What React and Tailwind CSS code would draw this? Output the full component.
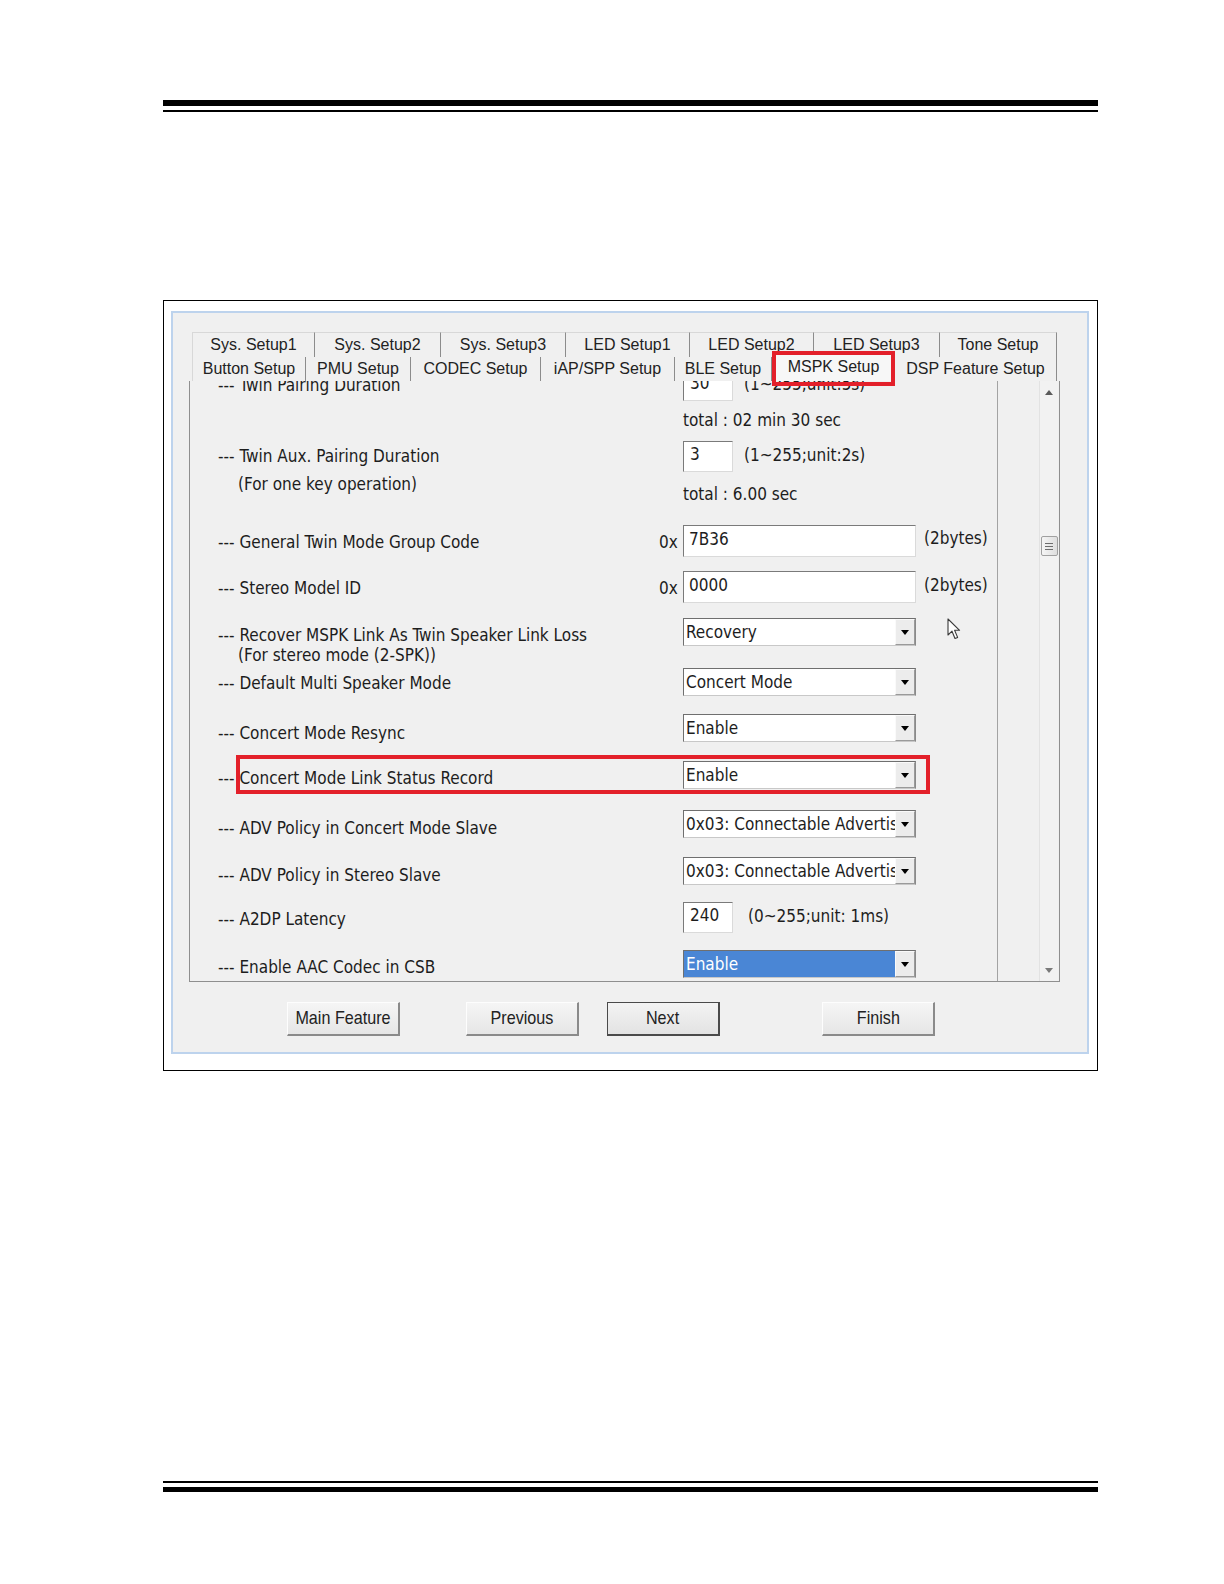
import React from "react";

const ui = "font-['DejaVu_Sans_Condensed','DejaVu_Sans',sans-serif] [font-stretch:condensed]";

const row1 = [
  ["Sys. Setup1", "w-[123px]"],
  ["Sys. Setup2", "w-[126px]"],
  ["Sys. Setup3", "w-[125px]"],
  ["LED Setup1", "w-[124px]"],
  ["LED Setup2", "w-[124px]"],
  ["LED Setup3", "w-[126px]"],
  ["Tone Setup", "w-[117px]"],
];

const row2 = [
  ["Button Setup", "w-[114px]"],
  ["PMU Setup", "w-[105px]"],
  ["CODEC Setup", "w-[130px]"],
  ["iAP/SPP Setup", "w-[134px]"],
  ["BLE Setup", "w-[97px]"],
  ["MSPK Setup", "w-[123px]", true],
  ["DSP Feature Setup", "w-[162px]"],
];

const Arrow = ({ up, dark }) => (
  <svg width="8" height="5" viewBox="0 0 8 5">
    <path d={up ? "M0 5H8L4 0Z" : "M0 0H8L4 5Z"} fill={dark ? "#000" : up ? "#5a5a5a" : "#7a7a7a"} />
  </svg>
);

function TextBox({ value, wide }) {
  return (
    <div
      className={
        wide
          ? "flex h-[32px] w-[233px] items-center border border-t-[#7a7a7a] border-l-[#7a7a7a] border-r-[#dadada] border-b-[#dadada] bg-white pb-[3px] pl-[5px]"
          : "flex h-[31px] w-[50px] items-center border border-t-[#7a7a7a] border-l-[#7a7a7a] border-r-[#dadada] border-b-[#dadada] bg-white pb-[3px] pl-[6px]"
      }
    >
      {value}
    </div>
  );
}

function Select({ value, active }) {
  return (
    <div className="flex h-[28px] w-[233px] border border-t-[#6f6f6f] border-l-[#6f6f6f] border-r-[#8a8a8a] border-b-[#c8c8c8] bg-white">
      <div
        className={
          active
            ? "flex flex-1 items-center overflow-hidden whitespace-nowrap bg-[#4a86d5] pl-[2px] pt-[2px] text-white"
            : "flex flex-1 items-center overflow-hidden whitespace-nowrap pl-[2px] pt-[2px]"
        }
      >
        {value}
      </div>
      <div className="flex w-[20px] shrink-0 items-center justify-center border border-t-[#fafafa] border-l-[#fafafa] border-r-[#9a9a9a] border-b-[#9a9a9a] bg-[#ececec]">
        <Arrow dark />
      </div>
    </div>
  );
}

function Row({ h, label, sub, prefix, lt, subGap, children }) {
  return (
    <div className={"flex shrink-0 " + h}>
      <div className={"w-[469px] shrink-0 pl-[28px] " + (lt || "pt-[7px]")}>
        <div className="h-[20px] whitespace-nowrap leading-[20px]">--- {label}</div>
        {sub && (
          <div className={"whitespace-nowrap pl-[20px] leading-[20px] " + (subGap || "")}>{sub}</div>
        )}
      </div>
      <div className={"w-[24px] shrink-0 leading-[20px] " + (lt || "pt-[7px]")}>{prefix}</div>
      <div>{children}</div>
    </div>
  );
}

function Btn({ label, def }) {
  return (
    <div
      className={
        def
          ? "flex h-[34px] w-[113px] items-center justify-center border border-[#4a4a4a] border-r-2 border-b-2 bg-linear-to-b from-[#f3f3f3] to-[#e3e3e3]"
          : "flex h-[34px] w-[113px] items-center justify-center border border-t-[#fdfdfd] border-l-[#fdfdfd] border-r-[#8a8a8a] border-b-[#8a8a8a] border-r-2 border-b-2 bg-linear-to-b from-[#f5f5f5] to-[#e6e6e6]"
      }
    >
      <span className="inline-block scale-x-85 whitespace-nowrap font-['Liberation_Sans',Arial,sans-serif] text-[19px] text-[#222]">
        {label}
      </span>
    </div>
  );
}

export default function App() {
  return (
    <div className="h-[1584px] w-[1224px] overflow-hidden bg-white text-[#1d1d1d]">
      {/* header rule */}
      <div className="pl-[163px] pt-[100px]">
        <div className="h-[6px] w-[935px] bg-black" />
        <div className="mt-[4px] h-[2px] w-[935px] bg-black" />
      </div>

      {/* screenshot frame */}
      <div className="ml-[163px] mt-[188px] h-[771px] w-[935px] border border-black pb-[16px] pl-[7px] pr-[8px] pt-[10px]">
        <div className={"flex h-full flex-col border-2 border-[#bdd3ed] bg-[#f0f0f0] text-[17px] " + ui}>
          {/* tab control */}
          <div className="ml-[16px] mt-[19px] w-[871px]">
            <div className="ml-[3px] flex h-[25px] font-['Liberation_Sans',Arial,sans-serif] text-[16px] text-[#222]">
              {row1.map(([t, w], i) => (
                <div
                  key={t}
                  className={
                    w +
                    " flex items-center justify-center border-r border-t border-r-[#8c8c8c] border-t-[#d8d8d8] " +
                    (i === 0 ? "border-l border-l-[#d8d8d8]" : "")
                  }
                >
                  {t}
                </div>
              ))}
            </div>
            <div className="ml-[3px] flex h-[24px] font-['Liberation_Sans',Arial,sans-serif] text-[16px] text-[#222]">
              {row2.map(([t, w, sel], i) =>
                sel ? (
                  <div key={t} className={w + " relative -mt-[4px] flex h-[28px] items-center justify-center bg-[#f7f7f7] pb-[1px]"}>
                    {t}
                    <div className="absolute -bottom-[5px] -top-[2px] left-0 right-0 z-10 border-4 border-[#e3202a]" />
                  </div>
                ) : (
                  <div
                    key={t}
                    className={
                      w +
                      " flex items-center justify-center border-r border-r-[#8c8c8c] " +
                      (i === 0 ? "border-l border-l-[#d8d8d8]" : "")
                    }
                  >
                    {t}
                  </div>
                )
              )}
            </div>

            {/* tab page */}
            <div className="flex h-[601px] border-b border-l border-r border-[#8f8f8f]">
              <div className="relative w-[808px] shrink-0 overflow-hidden border-r border-[#a3a3a3]">
                <div className="-mt-[11px] flex flex-col">
                  <Row h="h-[71px]" label="Twin Pairing Duration" lt="pt-[5px]">
                    <div className="flex items-center">
                      <TextBox value="30" />
                      <span className="ml-[11px] pb-[2px]">(1~255;unit:5s)</span>
                    </div>
                    <div className="mt-[9px] leading-[20px]">total : 02 min 30 sec</div>
                  </Row>
                  <Row h="h-[84px]" label="Twin Aux. Pairing Duration" sub="(For one key operation)" subGap="mt-[8px]" lt="pt-[5px]">
                    <div className="flex items-center">
                      <TextBox value="3" />
                      <span className="ml-[11px] pb-[2px]">(1~255;unit:2s)</span>
                    </div>
                    <div className="mt-[12px] leading-[20px]">total : 6.00 sec</div>
                  </Row>
                  <Row h="h-[46px]" label="General Twin Mode Group Code" prefix="0x">
                    <div className="flex items-center">
                      <TextBox value="7B36" wide />
                      <span className="ml-[8px] pb-[5px]">(2bytes)</span>
                    </div>
                  </Row>
                  <Row h="h-[47px]" label="Stereo Model ID" prefix="0x">
                    <div className="flex items-center">
                      <TextBox value="0000" wide />
                      <span className="ml-[8px] pb-[3px]">(2bytes)</span>
                    </div>
                  </Row>
                  <Row h="h-[50px]" label="Recover MSPK Link As Twin Speaker Link Loss" sub="(For stereo mode (2-SPK))">
                    <Select value="Recovery" />
                  </Row>
                  <Row h="h-[46px]" label="Default Multi Speaker Mode" lt="pt-[5px]">
                    <Select value="Concert Mode" />
                  </Row>
                  <Row h="h-[47px]" label="Concert Mode Resync" lt="pt-[9px]">
                    <Select value="Enable" />
                  </Row>
                  <div className="relative">
                    <div className="pointer-events-none absolute -top-[6px] left-[46px] z-10 h-[39px] w-[694px] border-4 border-[#e3202a]" />
                    <Row h="h-[49px]" label="Concert Mode Link Status Record">
                      <Select value="Enable" />
                    </Row>
                  </div>
                  <Row h="h-[47px]" label="ADV Policy in Concert Mode Slave" lt="pt-[8px]">
                    <Select value="0x03: Connectable Advertising" />
                  </Row>
                  <Row h="h-[45px]" label="ADV Policy in Stereo Slave" lt="pt-[8px]">
                    <Select value="0x03: Connectable Advertising" />
                  </Row>
                  <Row h="h-[48px]" label="A2DP Latency">
                    <div className="flex items-center">
                      <TextBox value="240" />
                      <span className="ml-[15px] pb-[2px]">(0~255;unit: 1ms)</span>
                    </div>
                  </Row>
                  <Row h="h-[48px]" label="Enable AAC Codec in CSB">
                    <Select value="Enable" active />
                  </Row>
                </div>

                {/* mouse pointer */}
                <svg className="absolute left-[757px] top-[237px]" width="14" height="22" viewBox="0 0 14 22">
                  <path d="M1 1V17L5 13.2L8 20.5L10.6 19.4L7.6 12.3H12.6Z" fill="#fff" stroke="#3a3a3a" strokeWidth="1.1" strokeLinejoin="round" />
                </svg>
              </div>
              <div className="w-[41px] shrink-0" />
              {/* scrollbar */}
              <div className="flex w-[19px] shrink-0 flex-col items-center border-l border-[#e2e2e2] bg-[#f2f2f2]">
                <div className="mt-[9px]">
                  <Arrow up />
                </div>
                <div className="mt-[141px] flex h-[20px] w-[17px] flex-col items-center justify-center gap-[2px] rounded-[2px] border border-[#a0a0a0] bg-linear-to-r from-[#f5f5f5] to-[#dedede]">
                  <div className="h-px w-[8px] bg-[#6d6d6d]" />
                  <div className="h-px w-[8px] bg-[#6d6d6d]" />
                  <div className="h-px w-[8px] bg-[#6d6d6d]" />
                </div>
                <div className="mt-auto mb-[8px]">
                  <Arrow />
                </div>
              </div>
            </div>
          </div>

          {/* wizard buttons */}
          <div className="ml-[114px] mt-[20px] flex">
            <Btn label="Main Feature" />
            <div className="ml-[66px]">
              <Btn label="Previous" />
            </div>
            <div className="ml-[28px]">
              <Btn label="Next" def />
            </div>
            <div className="ml-[102px]">
              <Btn label="Finish" />
            </div>
          </div>
        </div>
      </div>

      {/* footer rule */}
      <div className="pl-[163px] pt-[410px]">
        <div className="h-[2px] w-[935px] bg-black" />
        <div className="mt-[4px] h-[5px] w-[935px] bg-black" />
      </div>
    </div>
  );
}
